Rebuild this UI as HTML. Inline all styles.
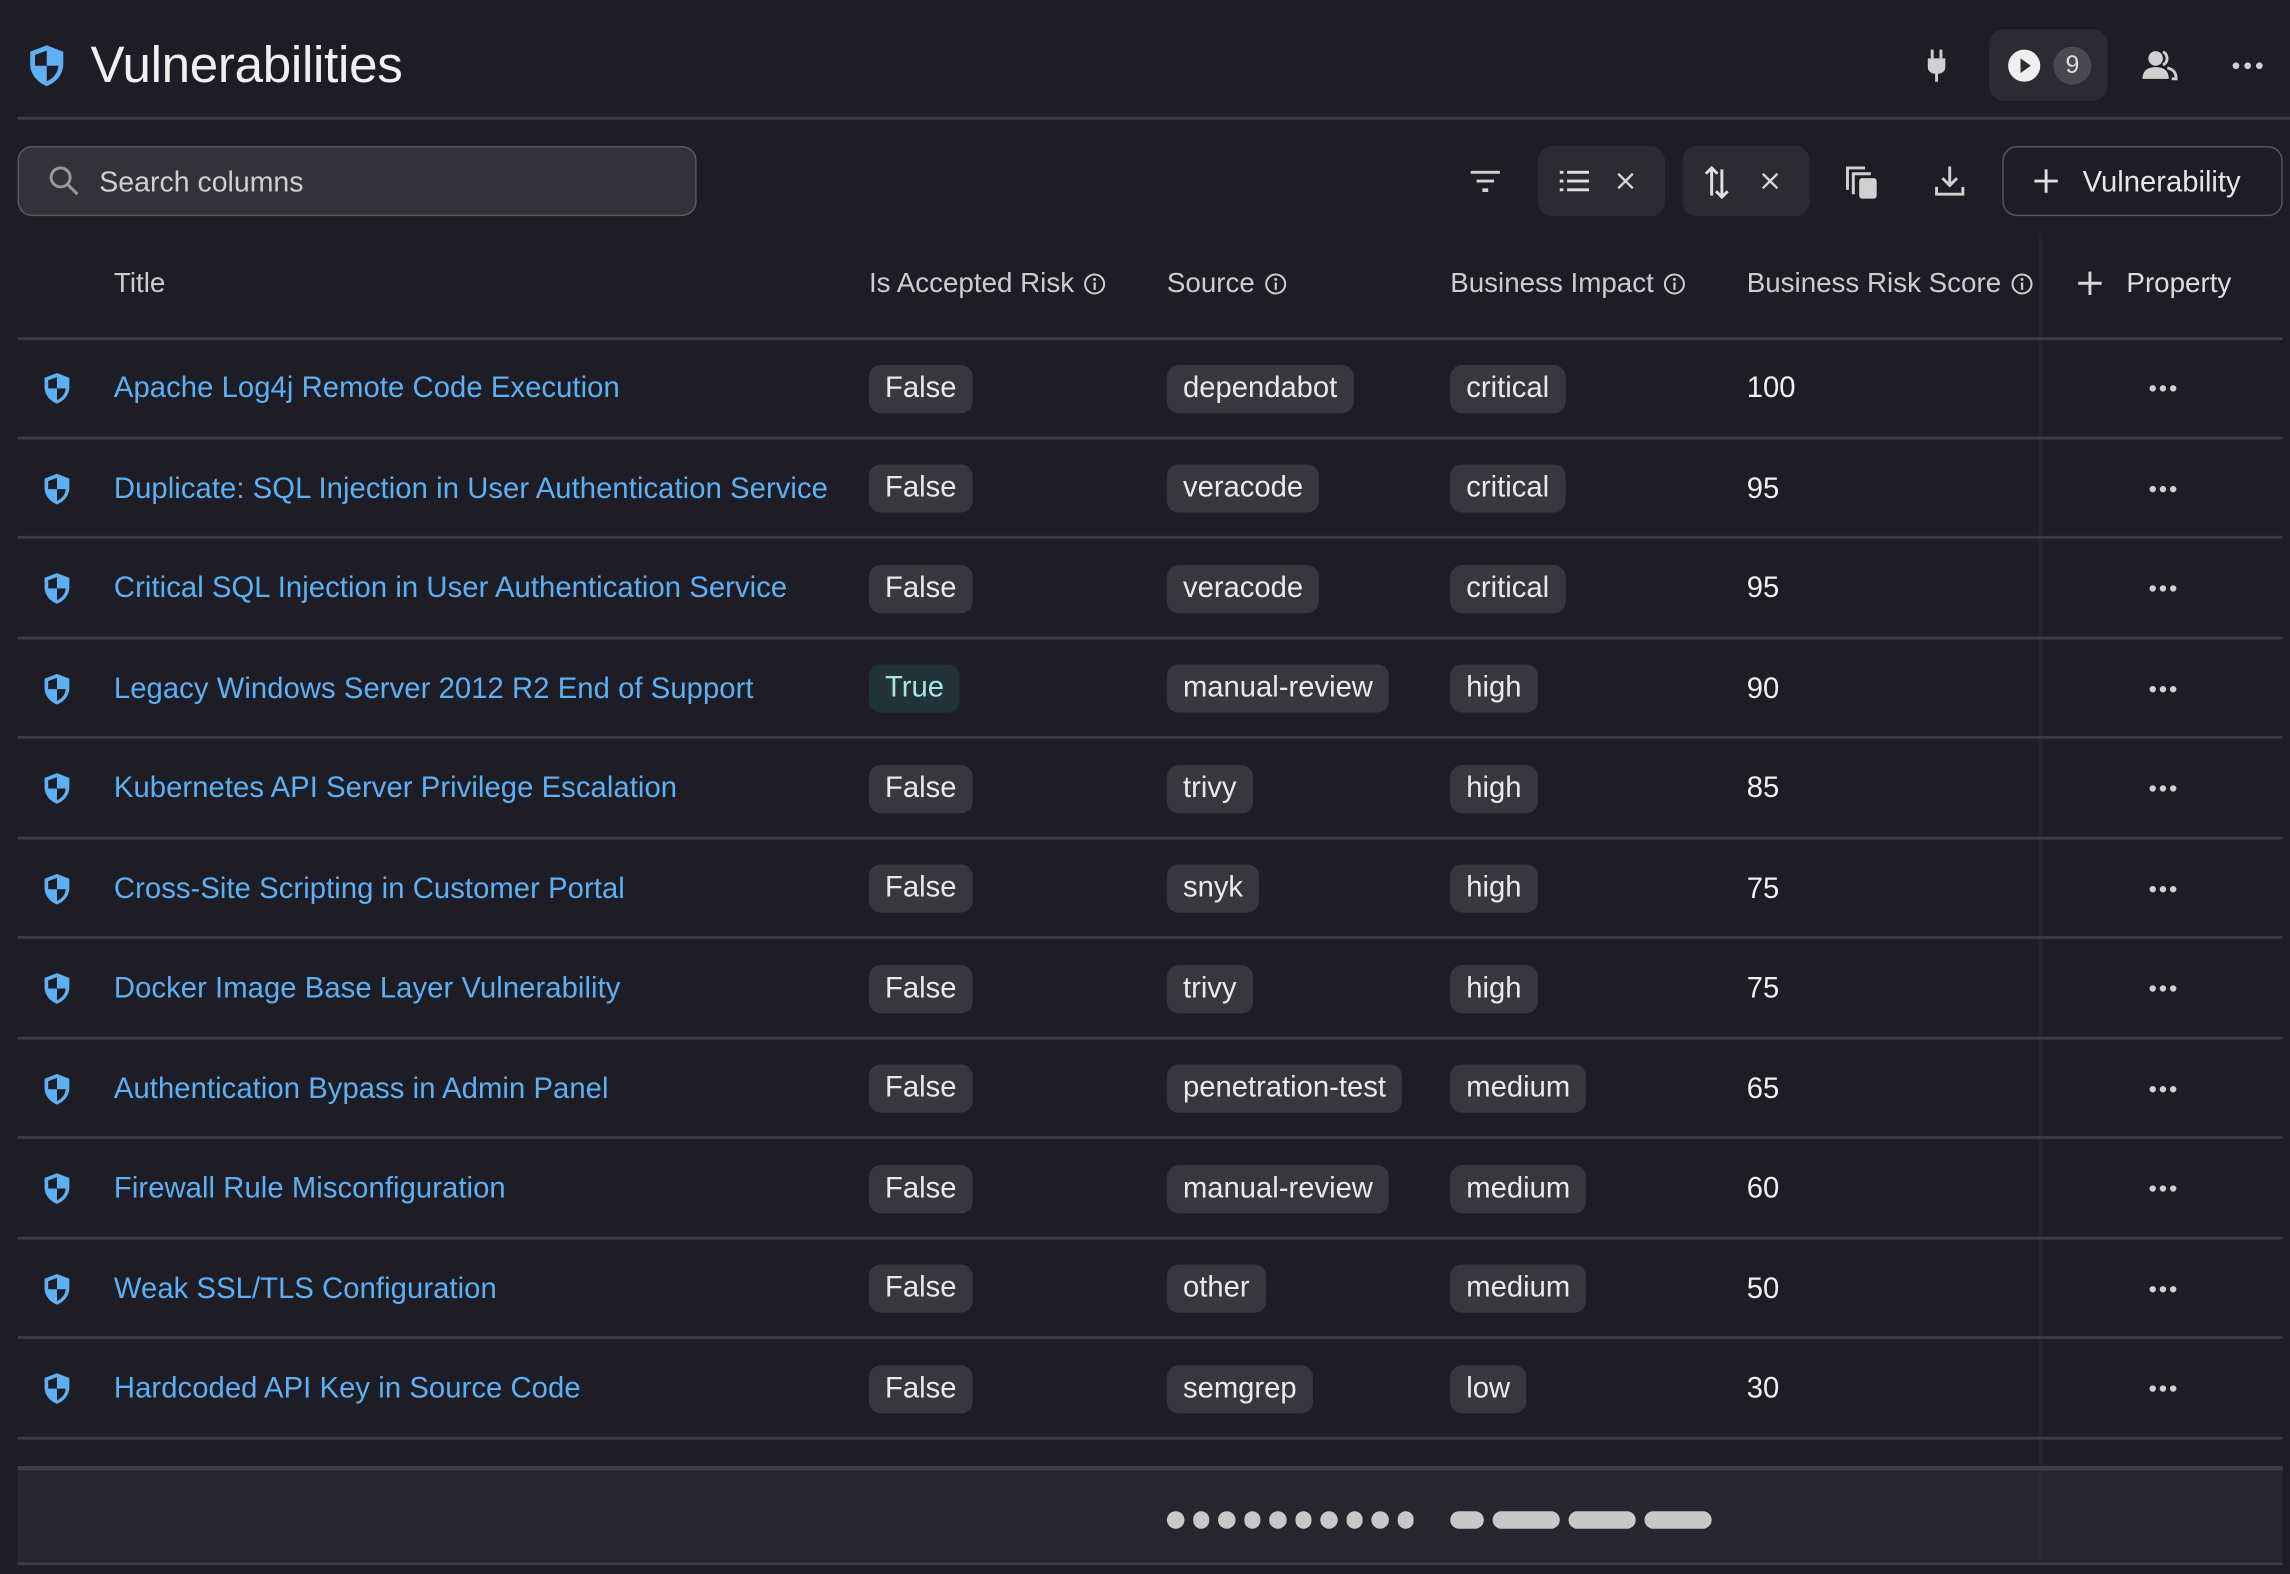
<!DOCTYPE html>
<html><head><meta charset="utf-8">
<style>
html,body{margin:0;padding:0;background:#1e1d26;overflow:hidden}
body{width:2290px;height:1574px}
#w{position:absolute;left:0;top:0;width:1568px;height:1078px;transform:scale(1.46046,1.46011);transform-origin:0 0;font-family:"Liberation Sans",sans-serif;color:#e8e8e8}
.a{position:absolute}
.title{left:62px;top:25px;font-size:35px;color:#f0f0f0;letter-spacing:-0.2px}
.hl{left:12px;right:0;height:2px;background:#3c3b41}
.search{left:12px;top:100px;width:463px;height:46px;background:#333238;border:1.5px solid #5a595e;border-radius:10px}
.search span{position:absolute;left:55px;top:13px;font-size:19.5px;color:#cfcfcf}
.pill{background:#2c2b32;border-radius:10px}
.btn{left:1371px;top:100px;width:190px;height:46px;border:1.5px solid #56555b;border-radius:10px}
.btn span{position:absolute;left:54px;top:13px;font-size:20px;color:#e6e6e6}
.th{top:184px;font-size:19px;color:#cdcdcd}
.th svg{vertical-align:-2px;margin-left:7px}
.row{position:absolute;left:12px;width:1551px;height:68.5px}
.row .ln{position:absolute;left:0;right:0;bottom:0;height:2px;background:#3c3b41}
.t{position:absolute;left:66px;top:23px;font-size:20px;color:#5cb0f3;white-space:nowrap;letter-spacing:0.05px}
.tag{position:absolute;top:17.5px;height:33px;line-height:33px;padding:0 11px;background:#38373d;border-radius:8px;font-size:20px;color:#eaeaea;white-space:nowrap}
.tag.tr{background:#213339;color:#a7e6e2}
.sc{position:absolute;left:1184px;top:23px;font-size:20px;color:#f0f0f0}
.sh{position:absolute;left:15px;top:21px}
.dots{position:absolute;left:1459px;top:30px}
.vs{left:1396px;top:160px;width:2px;height:912px;background:#25242c}
.foot{left:12px;top:1004px;width:1551px;height:68px;background:#27262e;border-top:3.5px solid #3f3e44;border-bottom:2px solid #3c3b41;box-sizing:border-box}
.d{position:absolute;top:1035px;width:11.5px;height:12px;border-radius:6px;background:#c8c8c8}
</style></head><body><div id="w">

<svg class="a" style="left:16px;top:28px" width="32" height="34" viewBox="0 0 24 24"><path d="M12 1.5L20.5 4.8V11C20.5 16.3 17 20.5 12 22.5C7 20.5 3.5 16.3 3.5 11V4.8Z" fill="#5cb0f3"/><path d="M12 4.2V12H6V6.5Z" fill="#1e1d26"/><path d="M12 12H18C17.7 15.8 15.3 18.6 12 20Z" fill="#1e1d26"/></svg>
<div class="a title">Vulnerabilities</div>

<svg class="a" style="left:1316px;top:33px" width="20" height="24" viewBox="0 0 20 24"><rect x="6" y="1" width="2" height="6" fill="#d0d0d0"/><rect x="12" y="1" width="2" height="6" fill="#d0d0d0"/><path d="M4 7H16V13C16 16 13.5 17.5 11 17.5V23H9V17.5C6.5 17.5 4 16 4 13Z" fill="#d0d0d0"/></svg>
<div class="a pill" style="left:1362px;top:20px;width:81px;height:49px"></div>
<svg class="a" style="left:1374px;top:33px" width="24" height="24" viewBox="0 0 24 24"><circle cx="12" cy="12" r="11" fill="#efefef"/><path d="M9.5 7L16.5 12L9.5 17Z" fill="#2c2b32"/></svg>
<div class="a" style="left:1406px;top:32px;width:26px;height:26px;border-radius:13px;background:#4a494f;color:#e0e0e0;font-size:17px;text-align:center;line-height:26px">9</div>
<svg class="a" style="left:1465px;top:33px" width="28" height="24" viewBox="0 0 28 24"><circle cx="11" cy="7" r="5" fill="#d0d0d0"/><path d="M2 21C2 15 6 13 11 13C16 13 20 15 20 21Z" fill="#d0d0d0"/><path d="M16 2.5A5 5 0 0 1 16 11.5" stroke="#d0d0d0" stroke-width="2" fill="none"/><path d="M19 13.5C23 14.5 25 16.5 25 21H22" stroke="#d0d0d0" stroke-width="2" fill="none"/></svg>
<svg class="a" style="left:1528px;top:41px" width="22" height="8"><circle cx="3" cy="4" r="2.3" fill="#d0d0d0"/><circle cx="11" cy="4" r="2.3" fill="#d0d0d0"/><circle cx="19" cy="4" r="2.3" fill="#d0d0d0"/></svg>

<div class="a hl" style="top:80px"></div>

<div class="a search"><svg style="position:absolute;left:20px;top:12px" width="22" height="22" viewBox="0 0 22 22"><circle cx="8.5" cy="8.5" r="6.5" stroke="#9a9a9a" stroke-width="2" fill="none"/><path d="M13.5 13.5L20 20" stroke="#9a9a9a" stroke-width="2"/></svg><span>Search columns</span></div>

<svg class="a" style="left:1006px;top:115px" width="22" height="18" viewBox="0 0 22 18"><rect x="1" y="2" width="20" height="2" fill="#cfcfcf"/><rect x="5" y="8" width="12" height="2" fill="#cfcfcf"/><rect x="9" y="14" width="4" height="2.5" fill="#cfcfcf"/></svg>
<div class="a pill" style="left:1053px;top:100px;width:87px;height:48px"></div>
<svg class="a" style="left:1066px;top:114px" width="24" height="20" viewBox="0 0 24 20"><g fill="#e0e0e0"><rect x="2" y="3" width="2.5" height="2"/><rect x="7" y="3" width="15" height="2"/><rect x="2" y="9" width="2.5" height="2"/><rect x="7" y="9" width="15" height="2"/><rect x="2" y="15" width="2.5" height="2"/><rect x="7" y="15" width="15" height="2"/></g></svg>
<svg class="a" style="left:1106px;top:117px" width="14" height="14"><path d="M2 2L12 12M12 2L2 12" stroke="#d8d8d8" stroke-width="1.6"/></svg>
<div class="a pill" style="left:1152px;top:100px;width:87px;height:48px"></div>
<svg class="a" style="left:1165px;top:112px" width="22" height="26" viewBox="0 0 22 26"><path d="M7 22V3M3 7L7 3L11 7" stroke="#e0e0e0" stroke-width="2" fill="none"/><path d="M14 4V23M10 19L14 23L18 19" stroke="#e0e0e0" stroke-width="2" fill="none"/></svg>
<svg class="a" style="left:1205px;top:117px" width="14" height="14"><path d="M2 2L12 12M12 2L2 12" stroke="#d8d8d8" stroke-width="1.6"/></svg>
<svg class="a" style="left:1263px;top:112px" width="24" height="26" viewBox="0 0 24 26"><path d="M2 18V3H14" stroke="#d0d0d0" stroke-width="2" fill="none"/><path d="M6 21V7H18" stroke="#d0d0d0" stroke-width="2" fill="none"/><rect x="10" y="10" width="12" height="14" rx="2" fill="#d0d0d0"/></svg>
<svg class="a" style="left:1324px;top:112px" width="22" height="24" viewBox="0 0 22 24"><path d="M11 2V15M6 10L11 15L16 10" stroke="#d0d0d0" stroke-width="2" fill="none"/><path d="M2 16V21H20V16" stroke="#d0d0d0" stroke-width="2" fill="none"/></svg>
<div class="a btn"><svg style="position:absolute;left:20px;top:14px" width="18" height="18"><path d="M9 1V17M1 9H17" stroke="#e0e0e0" stroke-width="2"/></svg><span>Vulnerability</span></div>

<div class="a th" style="left:78px">Title</div>
<div class="a th" style="left:595px">Is Accepted Risk<svg width="15" height="15"><circle cx="7.5" cy="7.5" r="6.5" stroke="#cdcdcd" stroke-width="1.4" fill="none"/><rect x="6.8" y="6.5" width="1.5" height="5" fill="#cdcdcd"/><circle cx="7.5" cy="4.3" r="1" fill="#cdcdcd"/></svg></div>
<div class="a th" style="left:799px">Source<svg width="15" height="15"><circle cx="7.5" cy="7.5" r="6.5" stroke="#cdcdcd" stroke-width="1.4" fill="none"/><rect x="6.8" y="6.5" width="1.5" height="5" fill="#cdcdcd"/><circle cx="7.5" cy="4.3" r="1" fill="#cdcdcd"/></svg></div>
<div class="a th" style="left:993px">Business Impact<svg width="15" height="15"><circle cx="7.5" cy="7.5" r="6.5" stroke="#cdcdcd" stroke-width="1.4" fill="none"/><rect x="6.8" y="6.5" width="1.5" height="5" fill="#cdcdcd"/><circle cx="7.5" cy="4.3" r="1" fill="#cdcdcd"/></svg></div>
<div class="a th" style="left:1196px">Business Risk Score<svg width="15" height="15"><circle cx="7.5" cy="7.5" r="6.5" stroke="#cdcdcd" stroke-width="1.4" fill="none"/><rect x="6.8" y="6.5" width="1.5" height="5" fill="#cdcdcd"/><circle cx="7.5" cy="4.3" r="1" fill="#cdcdcd"/></svg></div>
<svg class="a" style="left:1422px;top:185px" width="18" height="18"><path d="M9 1V17M1 9H17" stroke="#d8d8d8" stroke-width="2"/></svg>
<div class="a th" style="left:1456px;color:#dedede">Property</div>

<div class="a vs"></div>
<div class="a hl" style="top:231px;right:5px"></div>

<div id="rows"></div>
<script>
var R=[["Apache Log4j Remote Code Execution","False","dependabot","critical","100"],
["Duplicate: SQL Injection in User Authentication Service","False","veracode","critical","95"],
["Critical SQL Injection in User Authentication Service","False","veracode","critical","95"],
["Legacy Windows Server 2012 R2 End of Support","True","manual-review","high","90"],
["Kubernetes API Server Privilege Escalation","False","trivy","high","85"],
["Cross-Site Scripting in Customer Portal","False","snyk","high","75"],
["Docker Image Base Layer Vulnerability","False","trivy","high","75"],
["Authentication Bypass in Admin Panel","False","penetration-test","medium","65"],
["Firewall Rule Misconfiguration","False","manual-review","medium","60"],
["Weak SSL/TLS Configuration","False","other","medium","50"],
["Hardcoded API Key in Source Code","False","semgrep","low","30"]];
var sh='<svg class="sh" width="24" height="26" viewBox="0 0 24 24"><path d="M12 1.5L20.5 4.8V11C20.5 16.3 17 20.5 12 22.5C7 20.5 3.5 16.3 3.5 11V4.8Z" fill="#5cb0f3"/><path d="M12 4.2V12H6V6.5Z" fill="#1e1d26"/><path d="M12 12H18C17.7 15.8 15.3 18.6 12 20Z" fill="#1e1d26"/></svg>';
var dt='<svg class="dots" width="20" height="8"><circle cx="3" cy="4" r="2.2" fill="#d0d0d0"/><circle cx="10" cy="4" r="2.2" fill="#d0d0d0"/><circle cx="17" cy="4" r="2.2" fill="#d0d0d0"/></svg>';
var h='';
for(var i=0;i<R.length;i++){var r=R[i];
h+='<div class="row" style="top:'+(232+i*68.5)+'px">'+sh+'<div class="t">'+r[0]+'</div><div class="tag'+(r[1]=="True"?" tr":"")+'" style="left:583px">'+r[1]+'</div><div class="tag" style="left:787px">'+r[2]+'</div><div class="tag" style="left:981px">'+r[3]+'</div><div class="sc">'+r[4]+'</div>'+dt+'<div class="ln"></div></div>';}
document.getElementById('rows').innerHTML=h;
</script>

<div class="a foot"></div>
<div class="a" style="left:1396px;top:1008px;width:2px;height:62px;background:#2c2b33"></div>
<div class="d" style="left:799px"></div><div class="d" style="left:816.5px"></div><div class="d" style="left:834px"></div><div class="d" style="left:851.5px"></div><div class="d" style="left:869px"></div><div class="d" style="left:886.5px"></div><div class="d" style="left:904px"></div><div class="d" style="left:921.5px"></div><div class="d" style="left:939px"></div><div class="d" style="left:956.5px"></div>
<div class="d" style="left:993px;width:23px"></div><div class="d" style="left:1022px;width:46px"></div><div class="d" style="left:1074px;width:46px"></div><div class="d" style="left:1126px;width:46px"></div>
</div></body></html>
